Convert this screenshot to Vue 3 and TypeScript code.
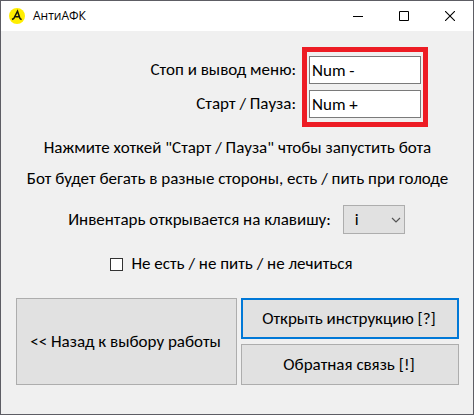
<script setup lang="ts">
import { ref } from 'vue'

const stopKey = ref<string>('Num -')
const startKey = ref<string>('Num +')
const inventoryKey = ref<string>('i')
const skipNeeds = ref<boolean>(false)
const inventoryKeys: string[] = ['i']
</script>

<template>
  <div class="window">
    <header class="titlebar">
      <svg class="app-icon" width="16" height="16" viewBox="0 0 16 16" aria-hidden="true">
        <circle cx="8" cy="8" r="8" fill="#ffee00" />
        <path d="M3 11.5 L4.8 10.5 L8.5 3.2 L11 10.5 L12.6 11.6 M5.5 8.8 H11" fill="none" stroke="#17170a" stroke-width="1.5" />
      </svg>
      <h1 class="title">АнтиАФК</h1>
      <div class="controls">
        <button type="button" class="control" aria-label="Свернуть">
          <svg width="10" height="10" viewBox="0 0 10 10"><path d="M0 5.5H10" stroke="#000" /></svg>
        </button>
        <button type="button" class="control" aria-label="Развернуть">
          <svg width="10" height="10" viewBox="0 0 10 10"><path d="M.5 .5H9.5V9.5H.5Z" fill="none" stroke="#000" /></svg>
        </button>
        <button type="button" class="control" aria-label="Закрыть">
          <svg width="10" height="10" viewBox="0 0 10 10"><path d="M0 0L10 10M10 0L0 10" stroke="#000" stroke-width="1.1" /></svg>
        </button>
      </div>
    </header>

    <main class="content">
      <div class="hotkeys">
        <div class="hotkey-labels">
          <label for="stop-key">Стоп и вывод меню:</label>
          <label for="start-key">Старт / Пауза:</label>
        </div>
        <div class="hotkey-fields">
          <input id="stop-key" v-model="stopKey" type="text" />
          <input id="start-key" v-model="startKey" type="text" />
        </div>
      </div>

      <p class="hint">Нажмите хоткей "Старт / Пауза" чтобы запустить бота</p>
      <p class="hint">Бот будет бегать в разные стороны, есть / пить при голоде</p>

      <div class="inventory">
        <label for="inventory-key">Инвентарь открывается на клавишу:</label>
        <div class="select">
          <select id="inventory-key" v-model="inventoryKey">
            <option v-for="key in inventoryKeys" :key="key" :value="key">{{ key }}</option>
          </select>
          <svg class="chevron" width="10" height="6" viewBox="0 0 10 6" aria-hidden="true">
            <path d="M1 1L5 5L9 1" fill="none" stroke="#555" stroke-width="1.2" />
          </svg>
        </div>
      </div>

      <label class="check">
        <input v-model="skipNeeds" type="checkbox" />
        <span>Не есть / не пить / не лечиться</span>
      </label>

      <div class="actions">
        <button type="button" class="action back">&lt;&lt; Назад к выбору работы</button>
        <button type="button" class="action primary">Открыть инструкцию [?]</button>
        <button type="button" class="action">Обратная связь [!]</button>
      </div>
    </main>
  </div>
</template>

<style>
body {
  background: #f0f0f0;
}
</style>

<style scoped>
.window {
  box-sizing: border-box;
  min-height: 100vh;
  border: 1px solid #5d5d64;
  background: #f0f0f0;
  color: #000;
  font-family: Carlito, "Open Sans", "Noto Sans", sans-serif;
  font-size: 17px;
  line-height: 20px;
}

button,
input,
select {
  box-sizing: border-box;
  margin: 0;
  color: inherit;
  font: inherit;
}

.titlebar {
  display: flex;
  align-items: center;
  height: 30px;
  padding-left: 8px;
  background: #fff;
}

.title {
  flex: 1;
  margin: 0 0 0 8px;
  font-family: "Open Sans", "Noto Sans", sans-serif;
  font-size: 12px;
  font-weight: 400;
}

.controls {
  display: flex;
  align-self: stretch;
}

.control {
  display: flex;
  align-items: center;
  justify-content: center;
  width: 46px;
  padding: 0;
  border: 0;
  background: transparent;
}

.content {
  display: flex;
  flex-direction: column;
  padding: 16px 14px 28px 15px;
}

.hotkeys {
  display: flex;
  align-items: center;
  justify-content: flex-end;
  gap: 6px;
  margin-right: 31px;
}

.hotkey-labels,
.hotkey-fields {
  display: flex;
  flex-direction: column;
  gap: 6px;
}

.hotkey-labels {
  line-height: 28px;
  text-align: right;
}

.hotkey-fields {
  padding: 4px 2px;
  border: 5px solid #ed1c24;
}

.hotkey-fields input {
  width: 112px;
  height: 28px;
  padding: 0 2px;
  border: 1px solid #7a7a7a;
  background: #fff;
}

.hint {
  margin: 11px 0 0;
  text-align: center;
  white-space: nowrap;
}

.inventory {
  display: flex;
  align-items: center;
  justify-content: center;
  gap: 12px;
  margin-top: 16px;
  padding-right: 2px;
}

.select {
  position: relative;
}

.select select {
  display: block;
  width: 62px;
  height: 29px;
  padding: 0 20px 0 11px;
  border: 1px solid #adadad;
  border-radius: 0;
  background: #e1e1e1;
  appearance: none;
}

.chevron {
  position: absolute;
  top: 12px;
  right: 4px;
  pointer-events: none;
}

.check {
  display: flex;
  align-items: center;
  align-self: center;
  gap: 8px;
  margin-top: 20px;
  padding-right: 12px;
}

.check input {
  width: 13px;
  height: 13px;
  border: 1px solid #333;
  background: #fff;
  appearance: none;
}

.check input:checked {
  background: #0078d7;
}

.actions {
  display: grid;
  grid-template-columns: 221fr 218fr;
  grid-template-rows: 41px 41px;
  gap: 5px 4px;
  margin-top: 24px;
}

.action {
  padding: 0 2px 0 0;
  border: 1px solid #adadad;
  background: #e1e1e1;
  white-space: nowrap;
}

.back {
  grid-row: span 2;
}

.primary {
  border: 2px solid #0078d7;
}
</style>
